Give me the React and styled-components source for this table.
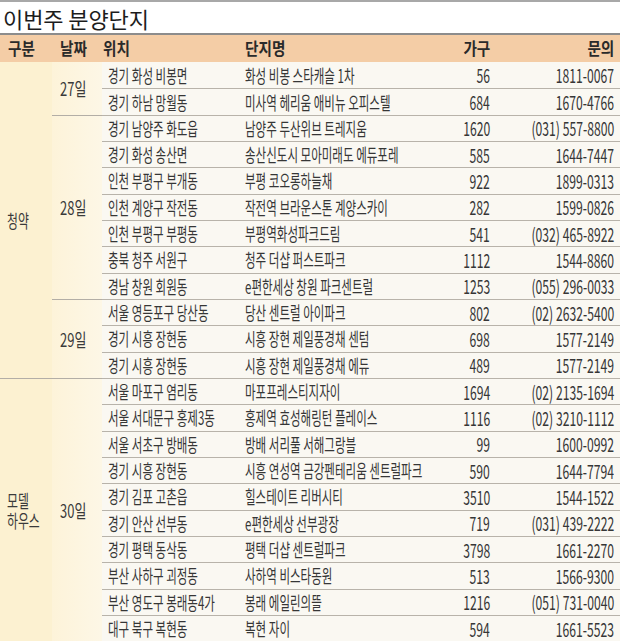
import React from "react";
import styled, { createGlobalStyle } from "styled-components";

const Global = createGlobalStyle`
  html, body { margin: 0; padding: 0; background: #ffffff; }
  body { font-family: "Noto Sans CJK KR", "Noto Sans", sans-serif; color: #363636; }
  * { box-sizing: border-box; }
`;

const ROW_H = 26.333;

const Page = styled.div`
  width: 620px;
  height: 641px;
  overflow: hidden;
  background: #ffffff;
`;

const TitleBar = styled.div`
  height: 33px;
  border-top: 2px solid #a8a8a8;
  display: flex;
  align-items: center;
  padding: 1px 0 0 3px;
`;

const Title = styled.h1`
  margin: 0;
  font-size: 22px;
  line-height: 1;
  font-weight: 400;
  color: #1c1c1c;
  letter-spacing: -0.1px;
`;

const HeaderRow = styled.div`
  display: flex;
  height: 29px;
  border-top: 2px solid #8c8c8c;
  background: #f4cda6;
`;

const HeadCell = styled.div`
  flex: none;
  width: ${(p) => p.$w}px;
  display: flex;
  align-items: center;
  justify-content: ${(p) => (p.$right ? "flex-end" : "flex-start")};
  padding: ${(p) => (p.$right ? "0 6px 2px 0" : `0 0 2px ${p.$pl}px`)};
  font-size: 17px;
  font-weight: 700;
  color: #2a2a2a;
`;

const Squeeze = styled.span`
  display: inline-block;
  flex-shrink: 0;
  white-space: nowrap;
  transform: scaleX(${(p) => p.$s});
  transform-origin: ${(p) => (p.$right ? "right center" : "left center")};
`;

const KindLine = styled.span`
  display: block;
  line-height: 20px;
`;

const Section = styled.div`
  display: flex;
`;

const KindCell = styled.div`
  flex: none;
  width: 52px;
  display: flex;
  align-items: center;
  padding-left: 7px;
  background: #fcf1d1;
  border-top: ${(p) => (p.$first ? "none" : "1px solid #b3aea6")};
  font-size: 18px;
  color: #3a3a3a;
`;

const DateColumn = styled.div`
  flex: 1;
  display: flex;
  flex-direction: column;
`;

const DateGroup = styled.div`
  display: flex;
`;

const DateCell = styled.div`
  flex: none;
  width: 50px;
  display: flex;
  align-items: center;
  padding-left: 8px;
  background: linear-gradient(90deg, #fdf3d9 0%, #fdf7e6 100%);
  border-top: ${(p) => (p.$first ? "none" : "1px solid #b3aea6")};
  font-size: 18px;
  color: #3a3a3a;
`;

const Rows = styled.div`
  flex: 1;
  display: flex;
  flex-direction: column;
  background: #faf8f2;
`;

const Row = styled.div`
  display: flex;
  height: ${ROW_H}px;
  border-top: ${(p) => (p.$first ? "none" : "1px solid #b8b3aa")};
`;

const Cell = styled.div`
  flex: none;
  width: ${(p) => p.$w}px;
  display: flex;
  align-items: center;
  justify-content: ${(p) => (p.$right ? "flex-end" : "flex-start")};
  padding: ${(p) => (p.$right ? "0 6px 1px 0" : `0 0 1px ${p.$pl}px`)};
  font-size: ${(p) => (p.$num ? 19 : 18)}px;
  color: #363636;
`;

const COLS = [
  { w: 138, pl: 6 },
  { w: 180, pl: 5 },
  { w: 76, right: true, num: true },
  { w: 124, right: true, num: true },
];

const data = [
  {
    kind: ["청약"],
    groups: [
      {
        date: "27일",
        rows: [
          ["경기 화성 비봉면", "화성 비봉 스타캐슬 1차", "56", "1811-0067"],
          ["경기 하남 망월동", "미사역 헤리움 애비뉴 오피스텔", "684", "1670-4766"],
        ],
      },
      {
        date: "28일",
        rows: [
          ["경기 남양주 화도읍", "남양주 두산위브 트레지움", "1620", "(031) 557-8800"],
          ["경기 화성 송산면", "송산신도시 모아미래도 에듀포레", "585", "1644-7447"],
          ["인천 부평구 부개동", "부평 코오롱하늘채", "922", "1899-0313"],
          ["인천 계양구 작전동", "작전역 브라운스톤 계양스카이", "282", "1599-0826"],
          ["인천 부평구 부평동", "부평역화성파크드림", "541", "(032) 465-8922"],
          ["충북 청주 서원구", "청주 더샵 퍼스트파크", "1112", "1544-8860"],
          ["경남 창원 회원동", "e편한세상 창원 파크센트럴", "1253", "(055) 296-0033"],
        ],
      },
      {
        date: "29일",
        rows: [
          ["서울 영등포구 당산동", "당산 센트럴 아이파크", "802", "(02) 2632-5400"],
          ["경기 시흥 장현동", "시흥 장현 제일풍경채 센텀", "698", "1577-2149"],
          ["경기 시흥 장현동", "시흥 장현 제일풍경채 에듀", "489", "1577-2149"],
        ],
      },
    ],
  },
  {
    kind: ["모델", "하우스"],
    groups: [
      {
        date: "30일",
        rows: [
          ["서울 마포구 염리동", "마포프레스티지자이", "1694", "(02) 2135-1694"],
          ["서울 서대문구 홍제3동", "홍제역 효성해링턴 플레이스", "1116", "(02) 3210-1112"],
          ["서울 서초구 방배동", "방배 서리풀 서해그랑블", "99", "1600-0992"],
          ["경기 시흥 장현동", "시흥 연성역 금강펜테리움 센트럴파크", "590", "1644-7794"],
          ["경기 김포 고촌읍", "힐스테이트 리버시티", "3510", "1544-1522"],
          ["경기 안산 선부동", "e편한세상 선부광장", "719", "(031) 439-2222"],
          ["경기 평택 동삭동", "평택 더샵 센트럴파크", "3798", "1661-2270"],
          ["부산 사하구 괴정동", "사하역 비스타동원", "513", "1566-9300"],
          ["부산 영도구 봉래동4가", "봉래 에일린의뜰", "1216", "(051) 731-0040"],
          ["대구 북구 복현동", "복현 자이", "594", "1661-5523"],
        ],
      },
    ],
  },
];

const BODY_S = 0.64;

export default function App() {
  return (
    <Page>
      <Global />
      <TitleBar>
        <Title>이번주 분양단지</Title>
      </TitleBar>
      <HeaderRow>
        <HeadCell $w={52} $pl={8}><Squeeze $s={0.86}>구분</Squeeze></HeadCell>
        <HeadCell $w={50} $pl={8}><Squeeze $s={0.86}>날짜</Squeeze></HeadCell>
        <HeadCell $w={138} $pl={1}><Squeeze $s={0.86}>위치</Squeeze></HeadCell>
        <HeadCell $w={180} $pl={5}><Squeeze $s={0.86}>단지명</Squeeze></HeadCell>
        <HeadCell $w={76} $right><Squeeze $s={0.86} $right>가구</Squeeze></HeadCell>
        <HeadCell $w={124} $right><Squeeze $s={0.86} $right>문의</Squeeze></HeadCell>
      </HeaderRow>
      {data.map((sec, si) => (
        <Section key={si}>
          <KindCell $first={si === 0}>
            <Squeeze $s={0.66}>
              {sec.kind.map((k) => (
                <KindLine key={k}>{k}</KindLine>
              ))}
            </Squeeze>
          </KindCell>
          <DateColumn>
            {sec.groups.map((g, gi) => (
              <DateGroup key={g.date}>
                <DateCell $first={si === 0 && gi === 0}>
                  <Squeeze $s={0.72}>{g.date}</Squeeze>
                </DateCell>
                <Rows>
                  {g.rows.map((r, ri) => (
                    <Row key={ri} $first={si === 0 && gi === 0 && ri === 0}>
                      {r.map((txt, ci) => (
                        <Cell
                          key={ci}
                          $w={COLS[ci].w}
                          $pl={COLS[ci].pl}
                          $right={COLS[ci].right}
                          $num={COLS[ci].num}
                        >
                          <Squeeze $s={BODY_S} $right={COLS[ci].right}>
                            {txt}
                          </Squeeze>
                        </Cell>
                      ))}
                    </Row>
                  ))}
                </Rows>
              </DateGroup>
            ))}
          </DateColumn>
        </Section>
      ))}
    </Page>
  );
}
